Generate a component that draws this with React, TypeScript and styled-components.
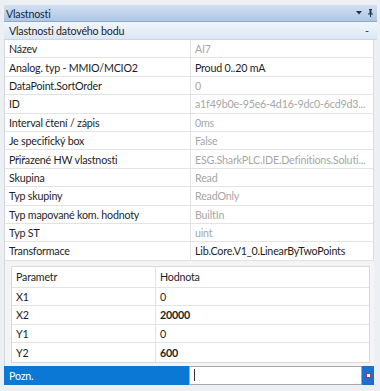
import React from "react"
import styled, { createGlobalStyle } from "styled-components"

const GlobalStyle = createGlobalStyle`
  html, body {
    margin: 0;
    padding: 0;
    background: #eceff3;
  }
  * {
    box-sizing: border-box;
  }
`

const Window = styled.div`
  width: 380px;
  height: 391px;
  padding: 5px 3px 0 4px;
  background: #eceff3;
  font-family: Lato, "Noto Sans", sans-serif;
  font-size: 10.7px;
  letter-spacing: -0.2px;
  color: #1e1e1e;
  overflow: hidden;
`

const TitleBar = styled.div`
  height: 17px;
  display: flex;
  align-items: center;
  padding: 0 4px 0 2px;
  background: linear-gradient(#d3e1f3, #adc6e5);
  border-bottom: 1px solid #8fa9cc;
  color: #15283f;
`

const Title = styled.span`
  flex: 1;
`

const TitleIcons = styled.div`
  display: flex;
  align-items: center;
  gap: 6px;
`

const Category = styled.div`
  height: 18px;
  display: flex;
  align-items: center;
  justify-content: space-between;
  padding: 0 8px 0 5px;
  background: linear-gradient(#f1f6fc, #dbe7f5);
  border-bottom: 1px solid #c9d6e6;
`

const Collapse = styled.span`
  font-size: 11px;
  line-height: 1;
  color: #333;
`

const PropList = styled.div`
  margin-right: 3px;
  background: #fff;
  border-left: 1px solid #d4d9e0;
  border-right: 1px solid #dcdcdc;
`

const PropRow = styled.div`
  display: grid;
  grid-template-columns: 185px 1fr;
  height: 18.4px;
  border-bottom: 1px solid #e3e3e3;
`

const Cell = styled.div<{ $muted?: boolean; $value?: boolean }>`
  display: flex;
  align-items: center;
  padding-left: 4px;
  white-space: nowrap;
  overflow: hidden;
  color: ${p => (p.$muted ? "#a6a6a6" : "#1e1e1e")};
  border-left: ${p => (p.$value ? "1px solid #e3e3e3" : "none")};
`

const TransformPanel = styled.div`
  margin-right: 3px;
  padding: 5px 4px 3px 6px;
  background: #f4f4f4;
  border-left: 1px solid #d4d9e0;
`

const ParamTable = styled.div`
  background: #fff;
  border: 1px solid #d9d9d9;
`

const ParamRow = styled.div<{ $head?: boolean }>`
  display: grid;
  grid-template-columns: 143px 1fr;
  height: ${p => (p.$head ? "21px" : "18.5px")};
  border-bottom: 1px solid #e3e3e3;
  &:last-child {
    border-bottom: none;
  }
`

const ParamCell = styled.div<{ $bold?: boolean; $value?: boolean }>`
  display: flex;
  align-items: center;
  padding-left: 4px;
  font-weight: ${p => (p.$bold ? 700 : 400)};
  border-left: ${p => (p.$value ? "1px solid #e3e3e3" : "none")};
`

const NoteRow = styled.div`
  display: grid;
  grid-template-columns: 185px 1fr 12px;
  height: 19px;
  margin-right: 3px;
`

const NoteLabel = styled.div`
  display: flex;
  align-items: center;
  padding-left: 5px;
  background: #0a78d4;
  color: #fff;
`

const NoteInput = styled.div`
  display: flex;
  align-items: center;
  padding-left: 4px;
  background: #fff;
  border: 1px solid #a8a8a8;
`

const Caret = styled.span`
  width: 1px;
  height: 12px;
  background: #333;
`

const NoteButton = styled.div`
  display: flex;
  align-items: center;
  justify-content: center;
  background: #1a6fd0;
`

const props: [string, string, boolean][] = [
  ["Název", "AI7", true],
  ["Analog. typ - MMIO/MCIO2", "Proud 0..20 mA", false],
  ["DataPoint.SortOrder", "0", true],
  ["ID", "a1f49b0e-95e6-4d16-9dc0-6cd9d3...", true],
  ["Interval čtení / zápis", "0ms", true],
  ["Je specifický box", "False", true],
  ["Přiřazené HW vlastnosti", "ESG.SharkPLC.IDE.Definitions.Soluti...", true],
  ["Skupina", "Read", true],
  ["Typ skupiny", "ReadOnly", true],
  ["Typ mapované kom. hodnoty", "BuiltIn", true],
  ["Typ ST", "uint", true],
  ["Transformace", "Lib.Core.V1_0.LinearByTwoPoints", false],
]

const params: [string, string, boolean][] = [
  ["X1", "0", false],
  ["X2", "20000", true],
  ["Y1", "0", false],
  ["Y2", "600", true],
]

export default function App() {
  return (
    <Window>
      <GlobalStyle />
      <TitleBar>
        <Title>Vlastnosti</Title>
        <TitleIcons>
          <svg width="6" height="4" viewBox="0 0 6 4">
            <path d="M0 0h6L3 3.5z" fill="#22344d" />
          </svg>
          <svg width="5" height="8" viewBox="0 0 5 8">
            <path d="M1 0h3v1H3.5v3.5H5v1H3V8H2V5.5H0v-1h1.5V1H1z" fill="#22344d" />
          </svg>
        </TitleIcons>
      </TitleBar>
      <Category>
        <span>Vlastnosti datového bodu</span>
        <Collapse>-</Collapse>
      </Category>
      <PropList>
        {props.map(([label, value, muted]) => (
          <PropRow key={label}>
            <Cell>{label}</Cell>
            <Cell $value $muted={muted}>
              {value}
            </Cell>
          </PropRow>
        ))}
      </PropList>
      <TransformPanel>
        <ParamTable>
          <ParamRow $head>
            <ParamCell>Parametr</ParamCell>
            <ParamCell $value>Hodnota</ParamCell>
          </ParamRow>
          {params.map(([name, val, bold]) => (
            <ParamRow key={name}>
              <ParamCell>{name}</ParamCell>
              <ParamCell $value $bold={bold}>
                {val}
              </ParamCell>
            </ParamRow>
          ))}
        </ParamTable>
      </TransformPanel>
      <NoteRow>
        <NoteLabel>Pozn.</NoteLabel>
        <NoteInput>
          <Caret />
        </NoteInput>
        <NoteButton>
          <svg width="5" height="5" viewBox="0 0 5 5">
            <rect x="0.5" y="0.5" width="4" height="4" fill="#fff" stroke="#a8306c" />
          </svg>
        </NoteButton>
      </NoteRow>
    </Window>
  )
}
